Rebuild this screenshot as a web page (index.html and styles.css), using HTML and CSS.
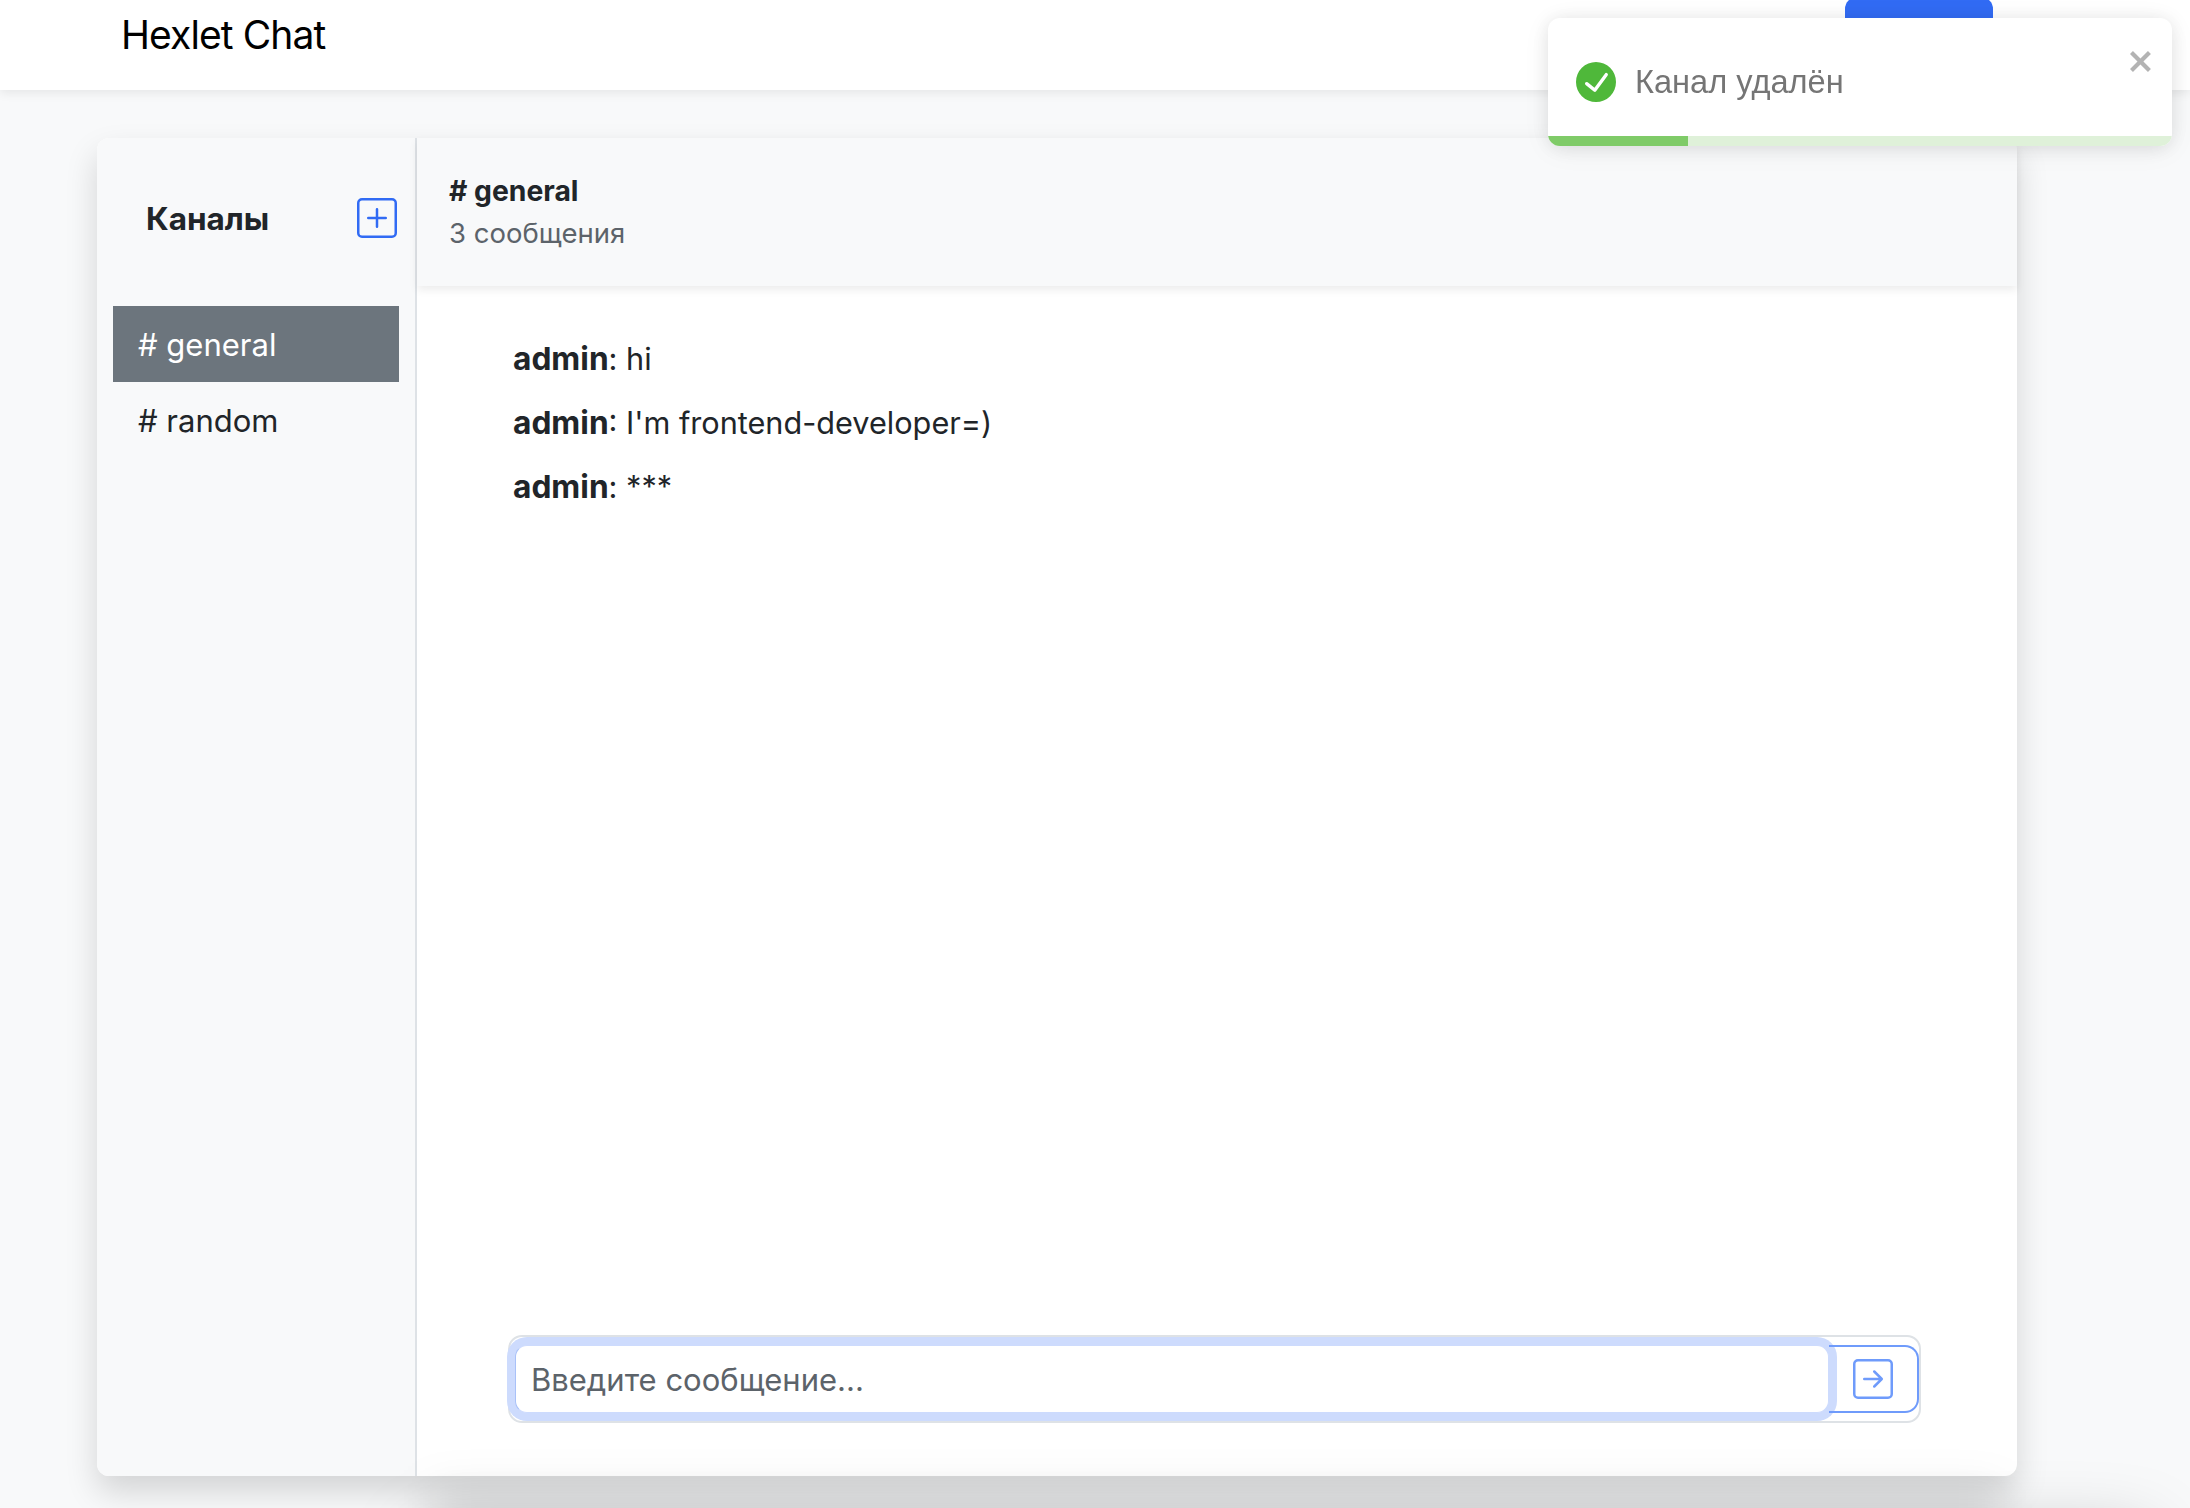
FILE: index.html
```html
<!DOCTYPE html>
<html lang="ru">
<head>
    <meta charset="UTF-8">
    <title>Hexlet Chat</title>
    <link rel="stylesheet" href="styles.css">
</head>
<body>
    <nav class="navbar">
        <a class="brand" href="#">Hexlet Chat</a>
        <button class="logout" type="button">Выйти</button>
    </nav>
    <div class="chat-card">
        <aside class="sidebar">
            <div class="sidebar-head">
                <b class="sidebar-title">Каналы</b>
                <button class="add-channel" type="button" aria-label="Добавить канал">
                    <svg viewBox="0 0 16 16" width="40" height="40" fill="currentColor"><path d="M14 1a1 1 0 0 1 1 1v12a1 1 0 0 1-1 1H2a1 1 0 0 1-1-1V2a1 1 0 0 1 1-1h12zM2 0a2 2 0 0 0-2 2v12a2 2 0 0 0 2 2h12a2 2 0 0 0 2-2V2a2 2 0 0 0-2-2H2z"/><path d="M8 4a.5.5 0 0 1 .5.5v3h3a.5.5 0 0 1 0 1h-3v3a.5.5 0 0 1-1 0v-3h-3a.5.5 0 0 1 0-1h3v-3A.5.5 0 0 1 8 4z"/></svg>
                </button>
            </div>
            <ul class="channels">
                <li class="channel active"># general</li>
                <li class="channel"># random</li>
            </ul>
        </aside>
        <main class="chat">
            <header class="chat-head">
                <p class="chat-name"># general</p>
                <p class="chat-count">3 сообщения</p>
            </header>
            <div class="messages">
                <p class="msg"><b>admin</b>: hi</p>
                <p class="msg"><b>admin</b>: I'm frontend-developer=)</p>
                <p class="msg"><b>admin</b>: ***</p>
            </div>
            <form class="msg-form">
                <input class="msg-input" type="text" placeholder="Введите сообщение...">
                <button class="msg-send" type="button" aria-label="Отправить">
                    <svg viewBox="0 0 16 16" width="40" height="40" fill="currentColor"><path d="M15 2a1 1 0 0 0-1-1H2a1 1 0 0 0-1 1v12a1 1 0 0 0 1 1h12a1 1 0 0 0 1-1V2zM0 2a2 2 0 0 1 2-2h12a2 2 0 0 1 2 2v12a2 2 0 0 1-2 2H2a2 2 0 0 1-2-2V2zm4.5 5.5a.5.5 0 0 0 0 1h5.793l-2.147 2.146a.5.5 0 0 0 .708.708l3-3a.5.5 0 0 0 0-.708l-3-3a.5.5 0 1 0-.708.708L10.293 7.5H4.5z"/></svg>
                </button>
            </form>
        </main>
    </div>
    <div class="toast">
        <svg class="toast-icon" viewBox="0 0 24 24" width="40" height="40"><path d="M12 0a12 12 0 1012 12A12.014 12.014 0 0012 0zm6.927 8.2l-6.845 9.289a1.011 1.011 0 01-1.43.188l-4.888-3.908a1 1 0 111.25-1.562l4.076 3.261 6.227-8.451a1 1 0 111.61 1.183z"/></svg>
        <span class="toast-text">Канал удалён</span>
        <svg class="toast-close" viewBox="0 0 14 16" width="28" height="32"><path d="M7.71 8.23l3.75 3.75-1.48 1.48-3.75-3.75-3.75 3.75L1 11.98l3.75-3.75L1 4.48 2.48 3l3.75 3.75L9.98 3l1.48 1.48-3.75 3.75z"/></svg>
        <div class="toast-track"><div class="toast-bar"></div></div>
    </div>
    <div class="bottom-shade"></div>
    <div class="bottom-shade-main"></div>
</body>
</html>
```

FILE: styles.css
```css
*{margin: 0;padding: 0;box-sizing: border-box;}
ul,li{list-style: none;}
a{text-decoration: none;}
html,body{height: 100%;overflow: hidden;}
body{font-family: Inter, "Noto Sans", sans-serif;font-size: 31px;line-height: 48px;color: #212529;background: #f8f9fa;}
button{font: inherit;background: none;border: 0;}

/* navbar */
.navbar{height: 90px;padding: 0 197px 0 121px;display: flex;justify-content: space-between;align-items: flex-start;background: #fff;box-shadow: 0 3px 10px rgba(0,0,0,.08);}
.brand{font-size: 39px;line-height: 70px;letter-spacing: -.9px;color: #000;}
.logout{width: 148px;height: 76px;margin-top: -3px;border-radius: 12px;background: #316bf4;color: #fff;}

/* card */
.chat-card{width: 1920px;height: 1338px;margin: 48px 0 0 97px;display: flex;border-radius: 12px;background: #fff;box-shadow: 0 16px 32px rgba(0,0,0,.15);}
.sidebar{width: 320px;padding: 0 16px;background: #f8f9fa;border-right: 2px solid #dee2e6;border-radius: 12px 0 0 12px;}
.sidebar-head{height: 168px;padding: 60px 0 0 33px;display: flex;justify-content: space-between;align-items: flex-start;}
.sidebar-title{font-size: 31.5px;line-height: 42px;}
.add-channel{width: 40px;height: 40px;margin-right: 2px;color: #316bf4;line-height: 0;}
.channel{height: 76px;padding-left: 25px;line-height: 78px;}
.channel.active{background: #6c757d;color: #fff;}

/* chat */
.chat{flex: 1;display: flex;flex-direction: column;}
.chat-head{height: 148px;padding: 32px 0 0 32px;background: #f8f9fa;border-radius: 0 12px 0 0;box-shadow: 0 4px 8px rgba(0,0,0,.075);}
.chat-name{font-weight: 700;font-size: 28.3px;line-height: 42px;}
.chat-count{font-size: 27.5px;line-height: 42px;color: #5c636a;}
.messages{flex: 1;padding: 49px 96px 0;}
.msg{margin-bottom: 16px;font-size: 30.65px;}
.msg b{font-size: 31.7px;}
.msg-form{width: 1413px;height: 88px;margin: 0 0 53px 91px;padding: 8px 0 8px 5px;display: flex;border: 2px solid #dee2e6;border-radius: 14px;}
.msg-input{flex: 1;height: 68px;padding: 0 15px;font: inherit;color: #212529;border: 1px solid #cddbfd;border-left-color: #a9c1f8;border-radius: 12px;outline: 0;box-shadow: 0 0 0 8px #cddbfd;}
.msg-input::placeholder{color: #5c636a;opacity: 1;}
.msg-send{width: 90px;height: 68px;display: flex;align-items: center;justify-content: center;color: #6f9bfb;border: 2px solid #6f9bfb;border-left: 0;border-radius: 0 14px 14px 0;position: relative;}

/* toast */
.toast{position: fixed;left: 1548px;top: 18px;width: 624px;height: 128px;padding: 10px 0 10px 28px;display: flex;align-items: center;border-radius: 12px;overflow: hidden;background: #fff;box-shadow: 0 2px 20px rgba(0,0,0,.1),0 4px 30px rgba(0,0,0,.05);}
.toast-icon{fill: #4fb83a;flex: none;}
.toast-text{margin: 0 0 0 19px;font-family: "Liberation Sans", Arial, sans-serif;font-size: 32.6px;color: #757575;}
.toast-close{position: absolute;right: 16px;top: 27px;fill: #b3b3b3;}
.toast-track{position: absolute;left: 0;right: 0;bottom: 0;height: 10px;background: #dff1d9;}
.toast-bar{width: 140px;height: 10px;background: #7fcb68;}

/* shadows coming up from below the window */
.bottom-shade{position: fixed;left: 420px;right: 40px;top: 1535px;height: 200px;box-shadow: 0 0 70px rgba(0,0,0,.26);}
.bottom-shade-main{position: fixed;left: 430px;width: 1570px;top: 1490px;height: 100px;background: rgba(0,0,0,.09);filter: blur(22px);}
```
